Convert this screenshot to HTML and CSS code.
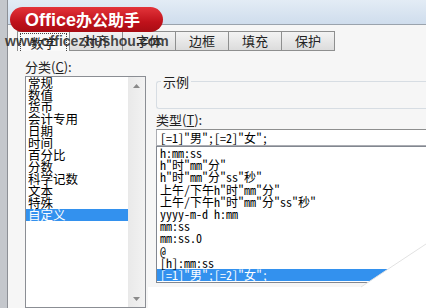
FILE: index.html
```html
<!DOCTYPE html>
<html lang="zh-CN">
<head>
    <meta charset="UTF-8">
    <meta name="viewport" content="width=device-width, initial-scale=1.0">
    <title>设置单元格格式</title>
    <link rel="stylesheet" href="styles.css">
</head>
<body>
    <div class="frame"></div>
    <div class="dialog">
        <div class="titlebar"></div>
        <div class="tabs">
            <div class="tab active"><span class="focus">数字</span></div>
            <div class="tab">对齐</div>
            <div class="tab">字体</div>
            <div class="tab">边框</div>
            <div class="tab">填充</div>
            <div class="tab">保护</div>
        </div>
        <div class="pane">
            <div class="category">
                <div class="label">分类(<u>C</u>):</div>
                <div class="listbox">
                    <ul class="items">
                        <li>常规</li>
                        <li>数值</li>
                        <li>货币</li>
                        <li>会计专用</li>
                        <li>日期</li>
                        <li>时间</li>
                        <li>百分比</li>
                        <li>分数</li>
                        <li>科学记数</li>
                        <li>文本</li>
                        <li>特殊</li>
                        <li class="selected">自定义</li>
                    </ul>
                    <div class="scrollbar">
                        <div class="arrow"><svg width="7" height="4" viewBox="0 0 7 4"><path d="M0 4L3.5 0L7 4Z" fill="#8a8a8a"/></svg></div>
                        <div class="arrow"><svg width="7" height="4" viewBox="0 0 7 4"><path d="M0 0L3.5 4L7 0Z" fill="#8a8a8a"/></svg></div>
                    </div>
                </div>
            </div>
            <div class="format">
                <fieldset class="sample">
                    <legend>示例</legend>
                    <div class="sample-body"></div>
                </fieldset>
                <div class="label">类型(<u>T</u>):</div>
                <div class="type-input">[=1]"男";[=2]"女";</div>
                <ul class="type-list">
                    <li>h:mm:ss</li>
                    <li>h"时"mm"分"</li>
                    <li>h"时"mm"分"ss"秒"</li>
                    <li>上午/下午h"时"mm"分"</li>
                    <li>上午/下午h"时"mm"分"ss"秒"</li>
                    <li>yyyy-m-d h:mm</li>
                    <li>mm:ss</li>
                    <li>mm:ss.0</li>
                    <li>@</li>
                    <li>[h]:mm:ss</li>
                    <li class="selected">[=1]"男";[=2]"女";</li>
                </ul>
            </div>
        </div>
    </div>

    <div class="banner"><span class="latin">Office</span>办公助手</div>
    <div class="watermark">www.officezhushou.com</div>
    <svg class="torn" width="426" height="308" viewBox="0 0 426 308">
        <polygon points="148,287 361,287 426,244 426,308 148,308" fill="#ffffff"/>
        <polyline points="361,287 426,244" fill="none" stroke="#e2e2e2" stroke-width="1"/>
    </svg>
</body>
</html>
```

FILE: styles.css
```css
body {
    margin: 0;
    width: 426px;
    height: 308px;
    overflow: hidden;
    display: flex;
    position: relative;
    background-color: #f6f6f6;
    color: #000;
    font-family: "Noto Sans CJK SC", sans-serif;
}
u {
    text-decoration: underline;
}
.frame {
    width: 7px;
    flex-shrink: 0;
    background-color: #c4c7cc;
    border-right: 1px solid #8d9096;
}
.dialog {
    flex: 1;
    min-width: 0;
    display: flex;
    flex-direction: column;
}
.titlebar {
    height: 26px;
    background: linear-gradient(#e3ecf5, #cfdded);
    border-bottom: 1px solid #9aa3ad;
}
.tabs {
    display: flex;
    margin-top: 6px;
    padding-left: 9px;
}
.tab {
    width: 53px;
    height: 20px;
    box-sizing: border-box;
    border: 1px solid #8e8f8f;
    border-left: none;
    background: linear-gradient(#f3f3f3, #dcdcdc);
    font-size: 13px;
    line-height: 18px;
    text-align: center;
    color: #222;
}
.tab.active {
    border-left: 1px solid #8e8f8f;
    border-bottom: none;
    background: #f9f9f9;
}
.focus {
    display: block;
    margin: 1px 2px 0;
    height: 17px;
    border: 1px dotted #444;
    border-bottom: none;
}
.pane {
    display: flex;
    padding: 8px 0 0 17px;
}
.label {
    font-size: 13px;
    line-height: 15px;
    color: #222;
}
.category {
    width: 121px;
    flex-shrink: 0;
    margin-right: 10px;
}
.listbox {
    margin-top: 2px;
    height: 230px;
    display: flex;
    border: 1px solid #8b8e94;
    background-color: #fff;
}
.items {
    flex: 1;
    margin: 0;
    padding: 0;
    list-style: none;
    font-size: 12.5px;
    line-height: 12px;
}
.items li {
    padding-left: 2px;
    height: 12px;
}
.selected {
    background-color: #3391ee;
    color: #fff;
}
.scrollbar {
    width: 17px;
    display: flex;
    flex-direction: column;
    justify-content: space-between;
    background: linear-gradient(90deg, #e9e9e9, #f2f2f2);
}
.arrow {
    height: 17px;
    display: flex;
    align-items: center;
    justify-content: center;
}
.format {
    flex: 1;
    min-width: 0;
    padding-top: 15px;
}
.sample {
    margin: 0;
    padding: 0;
    border: 1px solid #d7dde3;
    border-right: none;
    border-radius: 3px 0 0 3px;
}
.sample legend {
    margin-left: 4px;
    padding: 0 2px;
    font-size: 13px;
    line-height: 15px;
    color: #222;
}
.sample-body {
    height: 19px;
}
.format .label {
    margin-top: 3px;
}
.type-input {
    margin-top: 2px;
    height: 17px;
    box-sizing: border-box;
    border: 1px solid #abadb3;
    border-top-color: #8e8f8f;
    border-right: none;
    background-color: #fff;
    padding-left: 3px;
    font-family: "Noto Sans Mono CJK SC", "Liberation Mono", monospace;
    font-size: 12px;
    line-height: 15px;
}
.type-list {
    margin: 0;
    padding: 0 0 1px;
    list-style: none;
    border: 1px solid #828790;
    border-right: none;
    background-color: #fff;
    font-family: "Noto Sans Mono CJK SC", "Liberation Mono", monospace;
    font-size: 12px;
    line-height: 12.2px;
}
.type-list li {
    height: 12.2px;
    padding-left: 3px;
    white-space: nowrap;
}
.banner {
    position: absolute;
    left: 10px;
    top: 7px;
    width: 153px;
    height: 25px;
    box-sizing: border-box;
    padding-left: 15px;
    border-radius: 13px;
    background: linear-gradient(#e3343a, #c0121b 60%, #a80d14);
    color: #fff;
    font-weight: bold;
    font-size: 16px;
    line-height: 25px;
}
.banner .latin {
    font-family: "Liberation Sans", sans-serif;
    font-size: 18px;
}
.watermark {
    position: absolute;
    left: 5px;
    top: 33px;
    font-family: "Liberation Sans", sans-serif;
    font-weight: bold;
    font-size: 14px;
    line-height: 17px;
    color: rgba(40, 40, 40, 0.85);
}
.torn {
    position: absolute;
    left: 0;
    top: 0;
    pointer-events: none;
}
```
